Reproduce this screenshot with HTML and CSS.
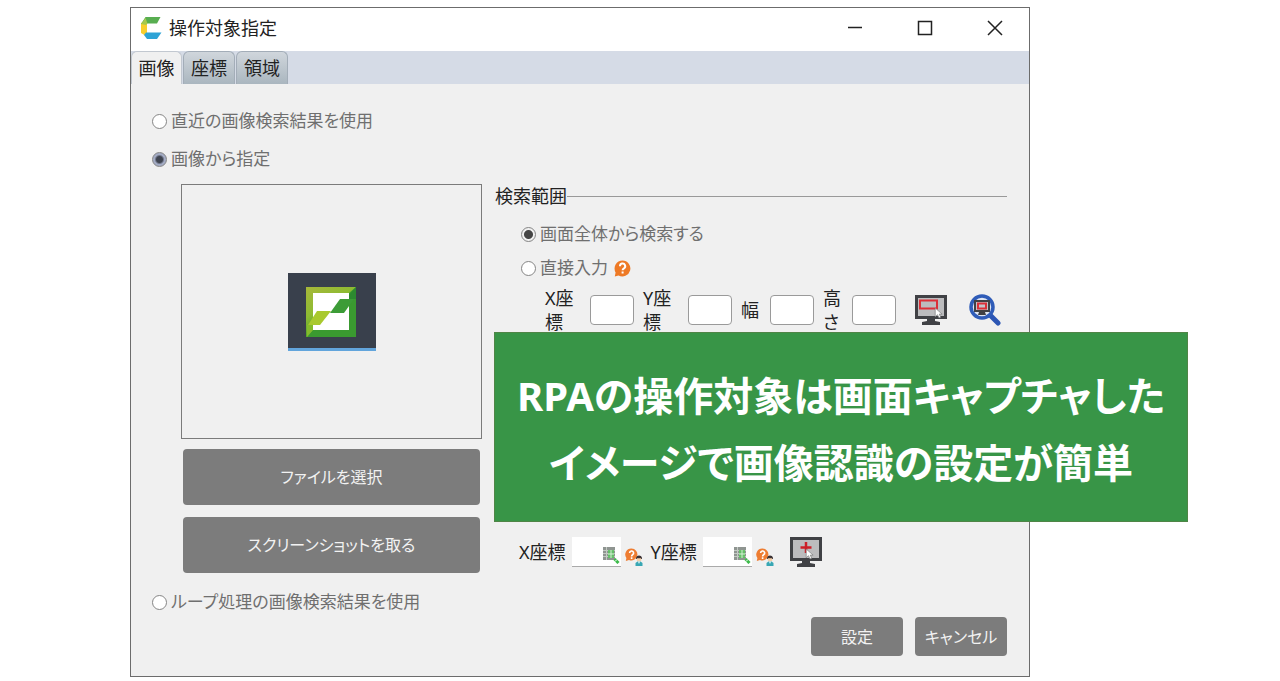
FILE: index.html
```html
<!DOCTYPE html>
<html lang="ja">
<head>
<meta charset="utf-8">
<title>操作対象指定</title>
<link rel="stylesheet" href="styles.css">
</head>
<body>
<svg class="defs" aria-hidden="true">
  <symbol id="monitor" viewBox="0 0 32 30">
    <path fill="#404145" d="M0 0h32v24H20v2l5 1v3H7v-3l5-1v-2H0z"/>
    <path fill="#bcbcbe" d="M3 3h26v18H3z"/>
  </symbol>
  <symbol id="cursor" viewBox="0 0 8 11">
    <path fill="#fff" stroke="#77787a" stroke-width=".6" d="M1 1v8l2-2 1.500 3 1.500-.7L4.700 6.500H7.300z"/>
  </symbol>
  <symbol id="picker" viewBox="0 0 17 17">
    <path fill="#8f9591" d="M0 0h12v13H0z"/>
    <path stroke="#c3cac3" d="M3.500 0v13M0 3.500h12M0 6.500h12M0 9.500h12"/>
    <path fill="#5cc45f" fill-opacity=".85" d="M5 3h6v8H5z"/>
    <path stroke="#d5f0d5" d="M8 3v8M5 7h6"/>
    <path stroke="#3dbb4a" stroke-width="3" d="M11.500 12l4 4"/>
    <path stroke="#fff" stroke-width="1" d="M12 14.500l2.200-2.200"/>
  </symbol>
  <symbol id="help-user" viewBox="0 0 18 18">
    <path fill="#ee7d32" d="M6.500.5a6 6 0 1 1-2.500 11.500L.8 13l.6-3A6 6 0 0 1 6.500.5z"/>
    <path fill="none" stroke="#fff" stroke-width="1.600" d="M4.600 5a2 2 0 1 1 3 1.700c-.8.500-1 .9-1 1.700M6.600 9.300v1.600"/>
    <path fill="#3a3134" d="M11 9.500a3.200 3.200 0 0 1 6 0v1.500h-6z"/>
    <path fill="#f4cfa8" d="M11.800 10.300h4.400v2.500l-2.200 1-2.200-1z"/>
    <path fill="#38a7b4" d="M10.500 18v-3l2-1.500h3l2 1.500v3z"/>
    <path fill="#fff" d="M13 13.500h2l-1 2.500z"/>
  </symbol>
</svg>
<div class="stage">
  <div class="window">
    <header class="titlebar">
      <svg class="logo" viewBox="0 0 22 22" aria-hidden="true">
        <path fill="#f8cf2d" d="M1 6l6-3v15l-1 1-5-3z"/>
        <path fill="#58ae51" d="M5.500 0H20.500L17 6.500H7.500L1 7z"/>
        <path fill="#2da3d6" d="M6 15.500H21.500L17 22H7l-3-4z"/>
        <path fill="#a7c94b" d="M1 7l4.500-6 2 5.500L6 8z"/>
      </svg>
      <h1 class="title">操作対象指定</h1>
      <div class="controls">
        <button class="control" aria-label="最小化"><svg viewBox="0 0 16 16"><path d="M1 7.500h14"/></svg></button>
        <button class="control" aria-label="最大化"><svg viewBox="0 0 16 16"><path d="M1.500 1.500h13v13h-13z"/></svg></button>
        <button class="control" aria-label="閉じる"><svg viewBox="0 0 16 16"><path d="M1 1l14 14M15 1L1 15"/></svg></button>
      </div>
    </header>
    <nav class="tabs" role="tablist">
      <button class="tab tab-active" role="tab" aria-selected="true">画像</button>
      <button class="tab" role="tab" aria-selected="false">座標</button>
      <button class="tab" role="tab" aria-selected="false">領域</button>
    </nav>
    <main class="panel">
      <label class="option"><input class="radio" type="radio" name="source">直近の画像検索結果を使用</label>
      <label class="option"><input class="radio radio-focus" type="radio" name="source" checked>画像から指定</label>
      <div class="columns">
        <section class="source">
          <div class="preview">
            <svg class="thumb" viewBox="0 0 88 78" role="img" aria-label="アイコン">
              <defs>
                <linearGradient id="frame" x1="0" y1="0" x2=".6" y2="1">
                  <stop offset="0" stop-color="#a8b83a"/><stop offset=".45" stop-color="#8dbb32"/><stop offset="1" stop-color="#259328"/>
                </linearGradient>
              </defs>
              <path fill="#39404c" d="M0 0h88v78H0z"/>
              <path fill="#62a5dc" d="M0 75h88v3H0z"/>
              <path fill="url(#frame)" d="M18 14h50v50H18z"/>
              <path fill="#fff" d="M25 20h36v37H25z"/>
              <path fill="#3a9a30" d="M61 20l7-6v50H19l6-7h36z"/>
              <path fill="#a9c92e" d="M29 38h14L32 52H20z"/>
              <path fill="#3c9c37" d="M52 26h14L56 40H42z"/>
              <path fill="#2c8a30" d="M61 22l7-8v12h-7z"/>
              <path fill="#84bb2c" d="M19 52h6v5l-6 7z"/>
            </svg>
          </div>
          <button class="button button-large">ファイルを選択</button>
          <button class="button button-large">スクリーンショットを取る</button>
        </section>
        <section class="settings">
          <fieldset class="range">
            <legend class="legend"><span>検索範囲</span></legend>
            <label class="option"><input class="radio" type="radio" name="range" checked>画面全体から検索する</label>
            <div class="direct">
              <label class="option"><input class="radio" type="radio" name="range">直接入力</label>
              <svg class="help" viewBox="0 0 17 17" aria-hidden="true">
                <path fill="#ee7a26" d="M8.500.5a8 8 0 1 1-4 15L.8 16.500l.8-4A8 8 0 0 1 8.500.5z"/>
                <path fill="none" stroke="#fff" stroke-width="2" d="M6 6.300a2.600 2.600 0 1 1 4 2c-1 .600-1.400 1-1.400 2M8.600 11.600v2"/>
              </svg>
            </div>
            <div class="bounds">
              <label class="name name-wide" for="x">X座標</label><input class="box" id="x" type="text">
              <label class="name name-wide" for="y">Y座標</label><input class="box" id="y" type="text">
              <label class="name" for="w">幅</label><input class="box" id="w" type="text">
              <label class="name" for="h">高さ</label><input class="box" id="h" type="text">
              <button class="tool tool-first" aria-label="範囲を選択">
                <svg viewBox="0 0 32 30" width="32" height="30">
                  <use href="#monitor" width="32" height="30"/>
                  <path fill="none" stroke="#dc3038" stroke-width="2" d="M5 5.500h17v8H5z"/>
                  <use href="#cursor" x="19" y="12" width="9" height="12"/>
                </svg>
              </button>
              <button class="tool" aria-label="範囲を確認">
                <svg viewBox="0 0 32 32" width="32" height="32">
                  <path stroke="#2c56b4" stroke-width="5" stroke-linecap="round" d="M22 22l7 7"/>
                  <circle cx="13" cy="13" r="11" fill="#dfe6f2" stroke="#2f5cb8" stroke-width="3.500"/>
                  <path fill="#404145" d="M5 6h16v12h-5l1 3H9l1-3H5z"/>
                  <path fill="#c4c4c8" d="M7 8h12v8H7z"/>
                  <path fill="none" stroke="#dc3038" stroke-width="2" d="M9 9.500h8v5H9z"/>
                </svg>
              </button>
            </div>
          </fieldset>
          <div class="position">
            <label for="px">X座標</label>
            <span class="field"><input class="line" id="px" type="text"><svg class="picker" aria-hidden="true"><use href="#picker"/></svg></span>
            <svg class="helper" aria-hidden="true"><use href="#help-user"/></svg>
            <label for="py">Y座標</label>
            <span class="field"><input class="line" id="py" type="text"><svg class="picker" aria-hidden="true"><use href="#picker"/></svg></span>
            <svg class="helper" aria-hidden="true"><use href="#help-user"/></svg>
            <button class="tool tool-point" aria-label="座標を選択">
              <svg viewBox="0 0 32 30" width="32" height="30">
                <use href="#monitor" width="32" height="30"/>
                <path stroke="#cc1f28" stroke-width="2.500" d="M16 5v11M10.500 10.500h11"/>
                <use href="#cursor" x="15" y="11" width="9" height="12"/>
              </svg>
            </button>
          </div>
        </section>
      </div>
      <label class="option"><input class="radio" type="radio" name="source">ループ処理の画像検索結果を使用</label>
      <footer class="actions">
        <button class="button">設定</button>
        <button class="button">キャンセル</button>
      </footer>
    </main>
  </div>
  <p class="banner">RPAの操作対象は画面キャプチャした<br>イメージで画像認識の設定が簡単</p>
</div>
</body>
</html>
```
FILE: styles.css
```css
* {
  box-sizing: border-box;
}

body {
  margin: 0;
  background: #fff;
  color: #222;
  font-family: "Noto Sans", "Noto Sans CJK JP", sans-serif;
  font-size: 18px;
  line-height: 24px;
  font-feature-settings: "palt";
}

button,
input {
  margin: 0;
  padding: 0;
  font: inherit;
  font-feature-settings: inherit;
}

svg {
  display: block;
  fill: none;
}

.defs {
  position: absolute;
  width: 0;
  height: 0;
}

.stage {
  position: relative;
  margin: 7px 250px 4px 130px;
  min-width: 900px;
}

.window {
  border: 1px solid #6c6c6c;
  background: #f0f0f0;
}

.titlebar {
  display: flex;
  align-items: center;
  height: 43px;
  padding: 0 26px 3px 9px;
  background: #fff;
}

.logo {
  width: 22px;
  height: 22px;
}

.title {
  flex: 1;
  margin: 0 0 0 7px;
  font-size: 18px;
  font-weight: 400;
}

.controls {
  display: flex;
  gap: 54px;
}

.control {
  border: 0;
  background: none;
}

.control svg {
  width: 16px;
  height: 16px;
  stroke: #222;
  stroke-width: 1.5;
}

.tabs {
  display: flex;
  gap: 1px;
  height: 33px;
  background: #d5dbe6;
}

.tab {
  width: 52px;
  border: 1px solid #a3adb8;
  border-bottom: 0;
  border-radius: 6px 6px 0 0;
  background: linear-gradient(#d0d6dc, #aab6bf);
  color: #222;
}

.tab-active {
  width: 51px;
  border-color: #c2c8d0;
  background: #f0f0f0;
}

.panel {
  padding: 25px 22px 20px 21px;
}

.option {
  display: flex;
  align-items: center;
  gap: 4px;
  color: #6f6f6f;
  font-size: 17px;
}

.option + .option {
  margin-top: 14px;
}

.radio {
  appearance: none;
  width: 15px;
  height: 15px;
  border: 1px solid #858585;
  border-radius: 50%;
  background: #fff;
}

.radio:checked {
  background: radial-gradient(circle, #454545 0 4px, #f0f0f0 5px);
}

.radio-focus:checked {
  background: radial-gradient(circle, #3f4450 0 3px, #a3abc4 5px);
}

.columns {
  display: flex;
  gap: 13px;
  margin: 13px 0 17px 29px;
}

.source {
  display: flex;
  flex-direction: column;
  gap: 10px;
  width: 301px;
}

.preview {
  display: flex;
  align-items: center;
  justify-content: center;
  height: 255px;
  border: 1px solid #7b7b7b;
}

.thumb {
  width: 88px;
  height: 78px;
}

.button {
  width: 92px;
  height: 39px;
  border: 0;
  border-radius: 4px;
  background: #7c7c7c;
  color: #f2f2f2;
  font-size: 16px;
}

.button-large {
  width: auto;
  height: 56px;
  margin: 0 2px;
}

.button-large + .button-large {
  margin-top: 2px;
}

.settings {
  display: flex;
  flex: 1;
  flex-direction: column;
  justify-content: space-between;
  padding-bottom: 6px;
}

.range {
  margin: 0;
  padding: 0;
  border: 0;
}

.legend {
  display: flex;
  align-items: center;
  width: 100%;
  padding: 0;
}

.legend::after {
  content: "";
  flex: 1;
  height: 1px;
  background: #999;
}

.range .option {
  margin: 0 0 0 26px;
}

.legend + .option {
  padding-top: 14px;
}

.direct {
  display: flex;
  align-items: center;
  gap: 6px;
  margin-top: 10px;
}

.help {
  width: 17px;
  height: 17px;
}

.bounds {
  display: flex;
  align-items: center;
  gap: 9px;
  margin: 6px 0 0 50px;
}

.name {
  width: 20px;
}

.name-wide {
  width: 36px;
}

.box {
  width: 44px;
  height: 30px;
  border: 1px solid #9a9a9a;
  border-radius: 4px;
  background: #fff;
}

.tool {
  border: 0;
  background: none;
}

.tool-first {
  margin: 0 13px 0 10px;
}

.position {
  display: flex;
  align-items: center;
  gap: 6px;
  margin-left: 24px;
}

.field {
  position: relative;
}

.line {
  display: block;
  width: 49px;
  height: 30px;
  border: 0;
  border-bottom: 1px solid #aaa;
  background: #fff;
}

.picker {
  position: absolute;
  right: 1px;
  bottom: 3px;
  width: 17px;
  height: 17px;
}

.helper {
  width: 18px;
  height: 18px;
  margin: 10px 2px 0 -2px;
}

.tool-point {
  margin-left: 8px;
}

.actions {
  display: flex;
  justify-content: flex-end;
  gap: 12px;
  margin-top: 3px;
}

.banner {
  position: absolute;
  top: 325px;
  right: -158px;
  left: 364px;
  margin: 0;
  padding: 29px 0 25px;
  border: 1px solid #4f8546;
  background: #389547;
  color: #fff;
  font-size: 40px;
  font-weight: 700;
  line-height: 67px;
  text-align: center;
  white-space: nowrap;
}
```
